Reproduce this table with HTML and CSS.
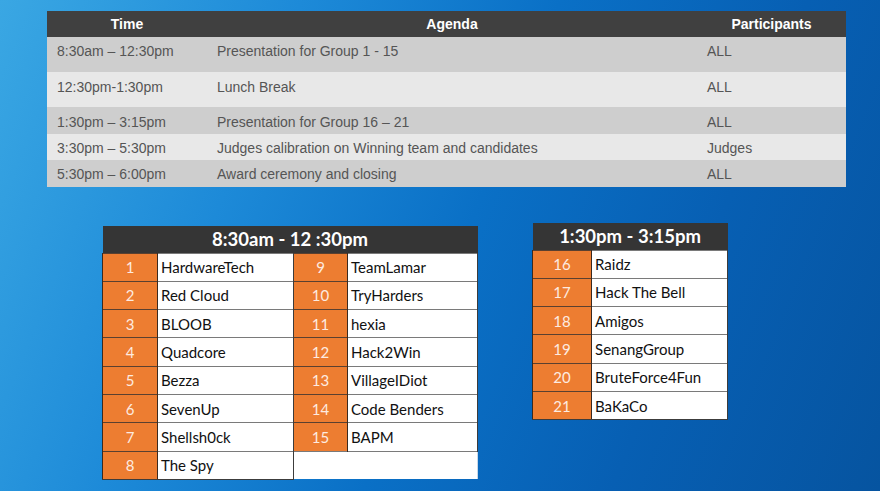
FILE: index.html
```html
<!DOCTYPE html>
<html>
<head>
<meta charset="utf-8">
<link rel="stylesheet" href="styles.css">
</head>
<body>
<div class="page">
  <table class="agenda">
    <colgroup><col class="c-time"><col class="c-agenda"><col class="c-part"></colgroup>
    <thead>
      <tr><th>Time</th><th>Agenda</th><th>Participants</th></tr>
    </thead>
    <tbody>
      <tr class="r1 odd"><td>8:30am – 12:30pm</td><td>Presentation for Group 1 - 15</td><td>ALL</td></tr>
      <tr class="r2 even"><td>12:30pm-1:30pm</td><td>Lunch Break</td><td>ALL</td></tr>
      <tr class="r3 odd"><td>1:30pm – 3:15pm</td><td>Presentation for Group 16 – 21</td><td>ALL</td></tr>
      <tr class="r4 even"><td>3:30pm – 5:30pm</td><td>Judges calibration on Winning team and candidates</td><td>Judges</td></tr>
      <tr class="r5 odd"><td>5:30pm – 6:00pm</td><td>Award ceremony and closing</td><td>ALL</td></tr>
    </tbody>
  </table>

  <div class="groups">
    <table class="grp grp-left">
      <colgroup><col class="n1"><col class="t1"><col class="n2"><col class="t2"></colgroup>
      <thead><tr><th colspan="4">8:30am - 12 :30pm</th></tr></thead>
      <tbody>
        <tr><td class="num">1</td><td class="name">HardwareTech</td><td class="num">9</td><td class="name">TeamLamar</td></tr>
        <tr><td class="num">2</td><td class="name">Red Cloud</td><td class="num">10</td><td class="name">TryHarders</td></tr>
        <tr><td class="num">3</td><td class="name">BLOOB</td><td class="num">11</td><td class="name">hexia</td></tr>
        <tr><td class="num">4</td><td class="name">Quadcore</td><td class="num">12</td><td class="name">Hack2Win</td></tr>
        <tr><td class="num">5</td><td class="name">Bezza</td><td class="num">13</td><td class="name">VillageIDiot</td></tr>
        <tr><td class="num">6</td><td class="name">SevenUp</td><td class="num">14</td><td class="name">Code Benders</td></tr>
        <tr><td class="num">7</td><td class="name">Shellsh0ck</td><td class="num">15</td><td class="name">BAPM</td></tr>
        <tr><td class="num">8</td><td class="name">The Spy</td><td class="empty" colspan="2"></td></tr>
      </tbody>
    </table>

    <table class="grp grp-right">
      <colgroup><col class="n3"><col class="t3"></colgroup>
      <thead><tr><th colspan="2">1:30pm - 3:15pm</th></tr></thead>
      <tbody>
        <tr><td class="num">16</td><td class="name">Raidz</td></tr>
        <tr><td class="num">17</td><td class="name">Hack The Bell</td></tr>
        <tr><td class="num">18</td><td class="name">Amigos</td></tr>
        <tr><td class="num">19</td><td class="name">SenangGroup</td></tr>
        <tr><td class="num">20</td><td class="name">BruteForce4Fun</td></tr>
        <tr><td class="num">21</td><td class="name">BaKaCo</td></tr>
      </tbody>
    </table>
  </div>
</div>
</body>
</html>
```

FILE: styles.css
```css
html, body {
  margin: 0;
  padding: 0;
}
body {
  width: 880px;
  height: 491px;
  overflow: hidden;
  background: linear-gradient(112deg, #3aa7e3 0%, #1d8ad8 28%, #0a70c6 52%, #075fb3 75%, #0654a0 100%);
}
.page {
  padding: 11px 0 0 47px;
}

/* top agenda table */
.agenda {
  border-collapse: collapse;
  table-layout: fixed;
  width: 799px;
  font-family: "Liberation Sans", Arial, sans-serif;
  font-size: 14px;
}
.c-time { width: 160px; }
.c-agenda { width: 490px; }
.c-part { width: 149px; }
.agenda thead tr { height: 26px; }
.agenda th {
  background: #404040;
  color: #ffffff;
  font-weight: bold;
  padding: 0;
  text-align: center;
  vertical-align: middle;
  line-height: 16px;
}
.agenda td {
  color: #555555;
  padding: 6px 0 0 10px;
  vertical-align: top;
  line-height: 16px;
  white-space: nowrap;
}
.agenda tr.odd td { background: #cecece; }
.agenda tr.even td { background: #e8e8e8; }
.agenda tr.r1 { height: 35px; }
.agenda tr.r2 { height: 35px; }
.agenda tr.r2 td { padding-top: 7px; }
.agenda tr.r3 { height: 27px; }
.agenda tr.r3 td { padding-top: 7px; }
.agenda tr.r4 { height: 26px; }
.agenda tr.r5 { height: 27px; }
.agenda tr.r5 td { padding-top: 6px; }

/* group tables */
.groups {
  display: flex;
  align-items: flex-start;
  margin-top: 36px;
  padding-left: 55px;
  gap: 54px;
}
.grp {
  border-collapse: collapse;
  table-layout: fixed;
  font-family: Lato, "Open Sans", sans-serif;
  font-size: 15px;
}
.grp-left {
  width: 375px;
  margin-top: 3px;
}
.n1 { width: 55px; }
.t1 { width: 136px; }
.n2 { width: 54px; }
.t2 { width: 130px; }
.grp-right { width: 195px; }
.n3 { width: 59px; }
.t3 { width: 136px; }

.grp thead tr { height: 27px; }
.grp th {
  background: #353535;
  color: #ffffff;
  font-weight: bold;
  font-size: 18.5px;
  line-height: 20px;
  padding: 0;
  text-align: center;
  vertical-align: middle;
}
.grp tbody tr { height: 28.3px; }
.grp td {
  padding: 0;
  vertical-align: middle;
  line-height: 18px;
  border-top: 1px solid #7a7a7a;
}
.grp td.num {
  background: #ed7d31;
  color: #fdebe0;
  text-align: center;
  border-right: 1px solid #3a2a20;
  border-left: 1px solid #3a2a20;
  border-top-color: #5a4030;
}
.grp td.name {
  background: #ffffff;
  color: #111111;
  padding-left: 3px;
  white-space: nowrap;
  border-right: 1px solid #3c3c3c;
}
.grp td.empty {
  background: #ffffff;
  border-right: 1px solid #c8d8e8;
}
.grp tbody tr:last-child td.num,
.grp tbody tr:last-child td.name {
  border-bottom: 1px solid #3c3c3c;
}
```
